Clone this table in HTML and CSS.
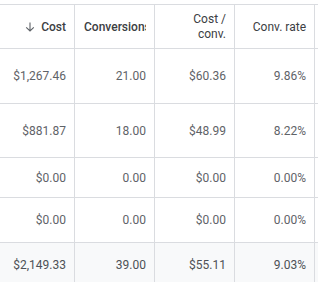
FILE: index.html
```html
<!DOCTYPE html>
<html>
<head>
<meta charset="utf-8">
<link rel="stylesheet" href="styles.css">
</head>
<body>
<div class="table">
  <div class="row head">
    <div class="cell strong"><span class="sort"><svg width="10" height="10" viewBox="0 0 10 10"><path d="M5 0.5V9M1.2 5.3L5 9l3.8-3.7" fill="none" stroke="#5f6368" stroke-width="1.1"/></svg></span>Cost</div>
    <div class="cell strong"><div class="clip">Conversions</div></div>
    <div class="cell"><div class="two">Cost /<br>conv.</div></div>
    <div class="cell">Conv. rate</div>
    <div class="cell last"></div>
  </div>
  <div class="row r1">
    <div class="cell">$1,267.46</div>
    <div class="cell">21.00</div>
    <div class="cell">$60.36</div>
    <div class="cell">9.86%</div>
    <div class="cell last"></div>
  </div>
  <div class="row r2">
    <div class="cell">$881.87</div>
    <div class="cell">18.00</div>
    <div class="cell">$48.99</div>
    <div class="cell">8.22%</div>
    <div class="cell last"></div>
  </div>
  <div class="row r3">
    <div class="cell">$0.00</div>
    <div class="cell">0.00</div>
    <div class="cell">$0.00</div>
    <div class="cell">0.00%</div>
    <div class="cell last"></div>
  </div>
  <div class="row r4">
    <div class="cell">$0.00</div>
    <div class="cell">0.00</div>
    <div class="cell">$0.00</div>
    <div class="cell">0.00%</div>
    <div class="cell last"></div>
  </div>
  <div class="row total">
    <div class="cell">$2,149.33</div>
    <div class="cell">39.00</div>
    <div class="cell">$55.11</div>
    <div class="cell">9.03%</div>
    <div class="cell last"></div>
  </div>
</div>
</body>
</html>
```
FILE: styles.css
```css
html, body {
  margin: 0;
  padding: 0;
  background: #ffffff;
  overflow: hidden;
}
body {
  font-family: Roboto, "Liberation Sans", sans-serif;
  width: 318px;
  height: 282px;
}
.table {
  margin-top: 4px;
  border-top: 1px solid #dadce0;
}
.row {
  display: grid;
  grid-template-columns: 75px 80px 80px 80px 1fr;
  border-bottom: 1px solid #dadce0;
  font-size: 12px;
  color: #5f6368;
}
.cell {
  border-right: 1px solid #dadce0;
  display: flex;
  align-items: center;
  justify-content: flex-end;
  padding: 0 8px 0 9px;
  min-width: 0;
  white-space: nowrap;
}
.cell.last {
  border-right: none;
  padding: 0;
}
.head {
  height: 43px;
  font-size: 12px;
  color: #3c4043;
}
.head .strong {
  font-weight: 500;
}
.clip {
  overflow: hidden;
  width: 100%;
  text-align: left;
}
.two {
  text-align: right;
  line-height: 15px;
}
.sort {
  display: inline-flex;
  margin-right: 6px;
}
.r1 { height: 54px; }
.r2 { height: 53px; }
.r3 { height: 39px; }
.r4 { height: 44px; }
.total {
  height: 44px;
  background: #f8f9fa;
  border-bottom: none;
  color: #4d5156;
}
```
